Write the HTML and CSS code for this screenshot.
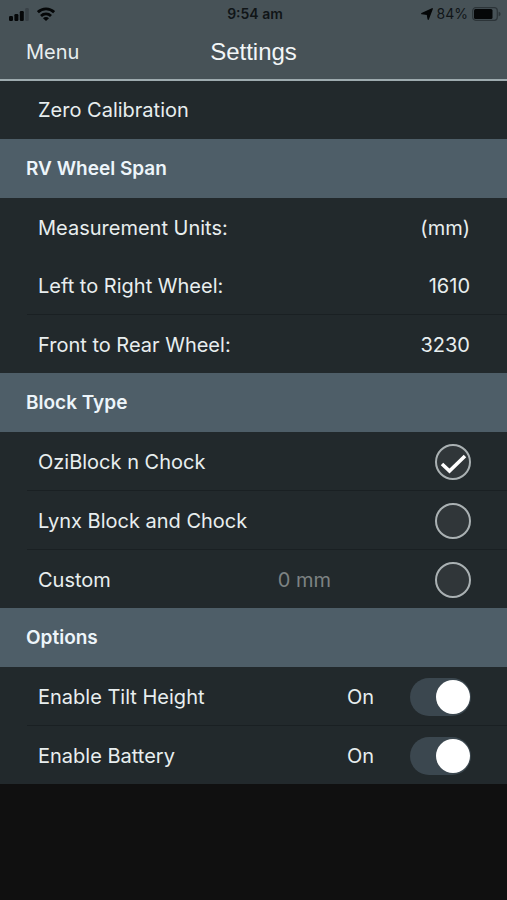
FILE: index.html
```html
<!DOCTYPE html>
<html lang="en">
<head>
<meta charset="utf-8">
<meta name="viewport" content="width=device-width, initial-scale=1">
<title>Settings</title>
<link rel="stylesheet" href="styles.css">
</head>
<body>
<header class="top">
  <div class="status">
    <div class="status-left">
      <svg width="20" height="14" viewBox="0 0 20 14" aria-hidden="true">
        <rect x="0" y="9" width="4" height="5" rx="1.2"/>
        <rect x="5.4" y="7" width="4" height="7" rx="1.2"/>
        <rect x="10.8" y="4" width="4" height="10" rx="1.2"/>
        <rect x="16.2" y="1" width="3.6" height="13" rx="1.2" opacity=".2"/>
      </svg>
      <svg width="18" height="14" viewBox="0 0 18 14" aria-hidden="true">
        <g fill="none" stroke="#050708" stroke-width="2.8">
          <path d="M.9 5.2a11.6 11.6 0 0 1 16.2 0"/>
          <path d="M4 8.9a7.2 7.2 0 0 1 10 0"/>
        </g>
        <path d="M9 14 6 11.2a4.2 4.2 0 0 1 6 0z"/>
      </svg>
    </div>
    <time class="clock">9:54 am</time>
    <div class="status-right">
      <svg width="12" height="12" viewBox="0 0 12 12" aria-hidden="true"><path d="M11.2.8 7.2 11.2 6.4 6.4.8 5.6z" stroke="#050708" stroke-width="1.4" stroke-linejoin="round"/></svg>
      <span>84%</span>
      <svg width="29" height="14" viewBox="0 0 29 14" aria-hidden="true">
        <rect x=".7" y=".7" width="24.6" height="12.6" rx="3" fill="none" stroke="#2c3438" stroke-width="1.2"/>
        <rect x="2" y="2" width="18.5" height="10" rx="1.5"/>
        <path d="M26.6 4.8q2 .5 2 2.2t-2 2.2z" fill="#2c3438"/>
      </svg>
    </div>
  </div>
  <nav class="bar">
    <button class="menu" type="button">Menu</button>
    <h1 class="title">Settings</h1>
  </nav>
</header>
<main>
  <button class="action" type="button">Zero Calibration</button>

  <section>
    <h2 class="heading">RV Wheel Span</h2>
    <div class="row"><span>Measurement Units:</span><button class="value" type="button">(mm)</button></div>
    <div class="row plain"><label for="lr">Left to Right Wheel:</label><input class="value" id="lr" type="text" inputmode="numeric" value="1610"></div>
    <div class="row"><label for="fr">Front to Rear Wheel:</label><input class="value" id="fr" type="text" inputmode="numeric" value="3230"></div>
  </section>

  <section>
    <h2 class="heading">Block Type</h2>
    <div class="row"><label for="ozi">OziBlock n Chock</label><span class="choice"><input id="ozi" type="radio" name="block" checked><svg class="tick" viewBox="0 0 36 36" aria-hidden="true"><path d="M7 20 14.5 27 30 12"/></svg></span></div>
    <div class="row"><label for="lynx">Lynx Block and Chock</label><span class="choice"><input id="lynx" type="radio" name="block"><svg class="tick" viewBox="0 0 36 36" aria-hidden="true"><path d="M7 20 14.5 27 30 12"/></svg></span></div>
    <div class="row"><label for="custom">Custom</label><input class="value size" type="text" aria-label="Custom block height" placeholder="0 mm"><span class="choice"><input id="custom" type="radio" name="block"><svg class="tick" viewBox="0 0 36 36" aria-hidden="true"><path d="M7 20 14.5 27 30 12"/></svg></span></div>
  </section>

  <section>
    <h2 class="heading">Options</h2>
    <div class="row"><label for="tilt">Enable Tilt Height</label><span class="state">On</span><input class="switch" id="tilt" type="checkbox" role="switch" checked></div>
    <div class="row"><label for="battery">Enable Battery</label><span class="state">On</span><input class="switch" id="battery" type="checkbox" role="switch" checked></div>
  </section>
</main>
</body>
</html>
```
FILE: styles.css
```css
* {
  box-sizing: border-box;
}

body {
  margin: 0;
  min-height: 100vh;
  background: #101010;
  color: #e8eeef;
  font: 20px/24px Inter, "Liberation Sans", sans-serif;
}

button,
input {
  margin: 0;
  padding: 0;
  border: 0;
  background: none;
  color: inherit;
  font: inherit;
}

.top {
  background: #475257;
  border-bottom: 2px solid #9eabaf;
}

.status {
  display: grid;
  grid-template-columns: 1fr auto 1fr;
  align-items: center;
  height: 27px;
  padding: 0 6px 0 9px;
  color: #101517;
  fill: #050708;
  font-size: 14px;
  line-height: 18px;
}

.status-left,
.status-right {
  display: flex;
  align-items: center;
  gap: 8px;
}

.status-right {
  justify-content: flex-end;
  gap: 4px;
}

.clock {
  font-weight: 600;
}

.bar {
  display: grid;
  grid-template-columns: 1fr auto 1fr;
  align-items: center;
  height: 52px;
  padding: 0 26px 2px;
}

.menu {
  justify-self: start;
}

.title {
  margin: 0;
  font: 24px/28px "Liberation Sans", sans-serif;
  color: #f2f6f7;
}

.action {
  display: block;
  width: 100%;
  height: 58px;
  padding: 0 38px;
  background: #22292c;
  text-align: left;
}

.heading {
  display: flex;
  align-items: center;
  height: 59px;
  margin: 0;
  padding: 0 26px;
  background: #4e5e68;
  color: #edf5fa;
  font-size: 19px;
  font-weight: 600;
}

.row {
  display: flex;
  align-items: center;
  height: 58px;
  padding: 1px 36px 0 38px;
  background: #22292c;
}

.row + .row {
  height: 59px;
  border-top: 1px solid;
  border-image: linear-gradient(to right, #22292c 28px, #1a2023 28px) 1;
}

.row + .plain {
  height: 58px;
  border: 0;
}

.value {
  width: 100px;
  margin-left: auto;
  padding-right: 1px;
  text-align: right;
}

.size {
  margin-right: 103px;
}

.size::placeholder {
  color: #7d8283;
  opacity: 1;
}

.choice {
  display: grid;
  margin-left: auto;
}

.size + .choice {
  margin-left: 0;
}

.choice > * {
  grid-area: 1 / 1;
  width: 36px;
  height: 36px;
}

.choice input {
  appearance: none;
  border: 2px solid #aab1b3;
  border-radius: 50%;
  background: #303639;
}

.tick {
  display: none;
  fill: none;
  stroke: #fff;
  stroke-width: 3.6;
  pointer-events: none;
}

.choice input:checked + .tick {
  display: block;
}

.state {
  margin-left: auto;
  margin-right: 36px;
}

.switch {
  appearance: none;
  display: flex;
  align-items: center;
  width: 61px;
  height: 38px;
  padding: 1px;
  border-radius: 19px;
  background: #3b474f;
}

.switch::before {
  content: "";
  width: 34px;
  height: 34px;
  border-radius: 50%;
  background: #fff;
}

.switch:checked {
  justify-content: flex-end;
}
```
